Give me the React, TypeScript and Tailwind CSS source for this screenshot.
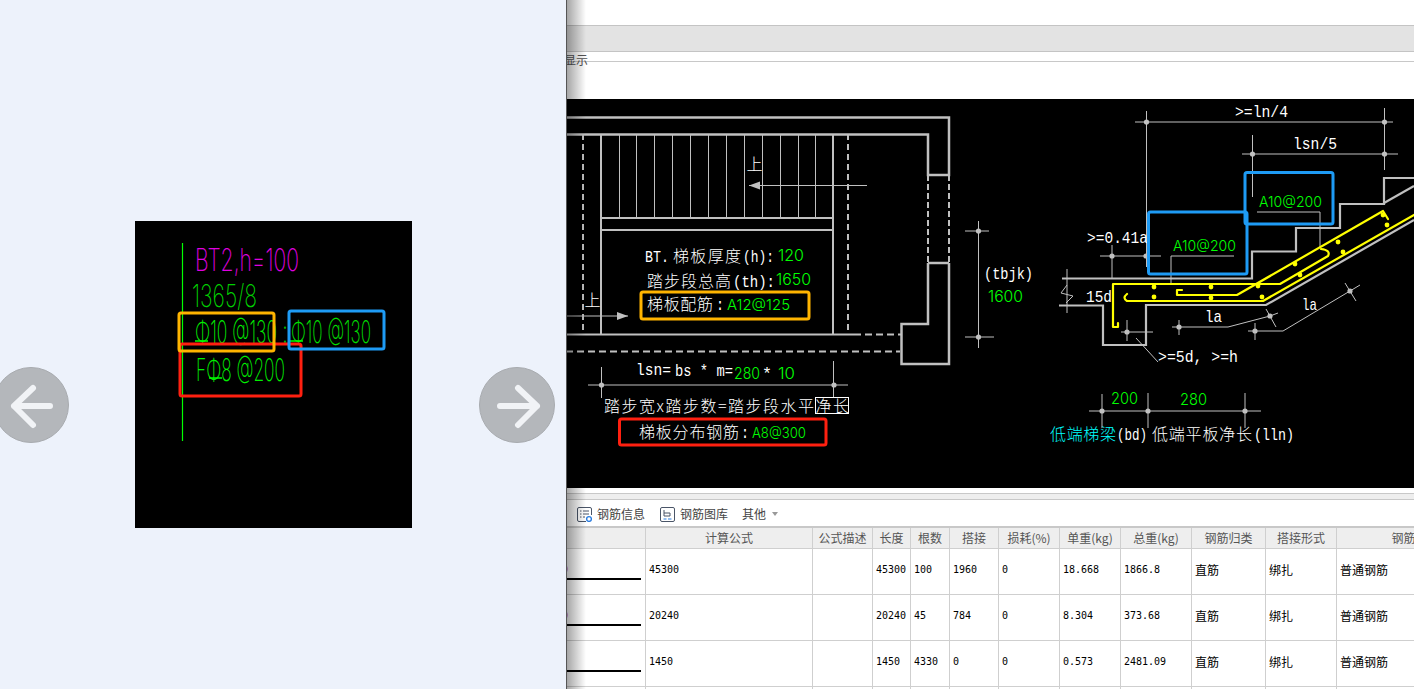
import type { ReactNode } from "react";

const gray = "#c0c0c0";
const green = "#00ff00";

function T({ x, y, w, fill = "#ffffff", size = 16, kind = "cjk", children }: { x: number; y: number; w?: number; fill?: string; size?: number; kind?: "cjk" | "mono" | "sans"; children: ReactNode }) {
  const font =
    kind === "cjk"
      ? "font-['Noto_Sans_CJK_SC',sans-serif] font-light"
      : kind === "mono"
        ? "font-['Liberation_Mono',monospace]"
        : "font-['Inter',sans-serif] font-light";
  const adjust = kind === "cjk" ? "spacing" : "spacingAndGlyphs";
  return (
    <text x={x} y={y} fill={fill} fontSize={size} textLength={w} lengthAdjust={w ? adjust : undefined} className={font}>
      {children}
    </text>
  );
}

// tall, hairline letters of the small plan drawing
function Cad({ x, y, w, fill, children }: { x: number; y: number; w: number; fill: string; children: ReactNode }) {
  return (
    <text x={x} y={y} fill={fill} fontSize={31} textLength={w} lengthAdjust="spacingAndGlyphs" className="font-['Inter',sans-serif] font-extralight">
      {children}
    </text>
  );
}

function Dot({ x, y, fill = gray, r = 2.6 }: { x: number; y: number; fill?: string; r?: number }) {
  return <circle cx={x} cy={y} r={r} fill={fill} />;
}

function Box({ x, y, x2, y2, stroke }: { x: number; y: number; x2: number; y2: number; stroke: string }) {
  return <rect x={x} y={y} width={x2 - x} height={y2 - y} rx={2} fill="none" stroke={stroke} strokeWidth={3} />;
}

function PlanDrawing() {
  return (
    <svg viewBox="135 221 277 307" className="block h-[307px] w-[277px] bg-black">
      <path d="M182.5 243V441" stroke="#00ff00" strokeWidth={1.2} />
      <Cad x={195} y={271} w={104} fill="#e000e0">BT2,h=100</Cad>
      <Cad x={192} y={307} w={65} fill="#00d000">1365/8</Cad>
      <Cad x={195} y={343} w={82} fill="#00f000">Φ10 @130</Cad>
      <Cad x={282} y={343} w={6} fill="#00d000">:</Cad>
      <Cad x={291} y={343} w={80} fill="#00e000">Φ10 @130</Cad>
      <Cad x={196} y={381} w={89} fill="#00f000">FΦ8 @200</Cad>
      <path d="M195 341H208M290 341H303M209 378H222" stroke="#00ff00" strokeWidth={1.5} />
      <Box x={180} y={344} x2={301} y2={396} stroke="#ff2010" />
      <Box x={179} y={313} x2={274} y2={351} stroke="#ffb400" />
      <Box x={289} y={311} x2={384} y2={349} stroke="#1e9bf5" />
    </svg>
  );
}

function StairDrawing() {
  const treads = [619.5, 636.5, 654.5, 672.5, 690.5, 708.5, 726.5, 744.5, 762.5, 780.5, 798.5, 815.5];
  return (
    <svg viewBox="566 99 848 389" className="block h-[389px] w-[848px] bg-black">
      {/* stair plan */}
      <g fill="none" stroke={gray} strokeWidth={2.5}>
        <path d="M566 117.5H949V175H928V134.5H566" />
        <path d="M928 263H949M928 263V324H901.5V364H949V263" />
        <path d="M928 175V263M949 175V263" strokeDasharray="6 3" strokeWidth={2} />
        <path d="M583 134V334M848 134V334" strokeDasharray="6 4" strokeWidth={2} />
        <path d="M601 134V334M833 134V334" strokeWidth={2} />
        <path d="M601 218H833M601 230H833" strokeWidth={2} />
        <path d="M566 334.5H854" strokeWidth={2} />
        <path d="M854 334.5H901M566 351.5H900" strokeDasharray="7 4" strokeWidth={2} />
      </g>
      <g stroke={gray} strokeWidth={1} fill="none">
        {treads.map((x) => (
          <path key={x} d={`M${x} 135V218`} />
        ))}
        <path d="M749 185.5H867M566 316H628" />
        <path d="M588 385H848M601.5 367V398M833.5 361V398" />
        <path d="M978.5 221V348M965 231H989M965 337H994" />
      </g>
      <path d="M749 185.5L760 181.5V189.5Z" fill={gray} />
      <path d="M628 316L617 312V320Z" fill={gray} />
      <Dot x={601.5} y={385} />
      <Dot x={834} y={385} />
      <Dot x={978.5} y={231} />
      <Dot x={978.5} y={337} />
      <T x={746.5} y={170}>上</T>
      <T x={584.5} y={306}>上</T>
      <T x={645} y={262} w={24} kind="mono">BT.</T>
      <T x={673} y={262} w={68}>梯板厚度</T>
      <T x={743} y={262} w={31} kind="mono">(h):</T>
      <T x={778} y={261} w={26} fill={green} kind="sans">120</T>
      <T x={647} y={287} w={84}>踏步段总高</T>
      <T x={733} y={287} w={42} kind="mono">(th):</T>
      <T x={776} y={285} w={35} fill={green} kind="sans">1650</T>
      <T x={647} y={310} w={66}>梯板配筋</T>
      <T x={716} y={310} w={8} kind="mono">:</T>
      <T x={727} y={310} w={63} fill={green} size={15} kind="sans">A12@125</T>
      <T x={636} y={375} w={35} kind="mono">lsn=</T>
      <T x={675} y={376} w={58} kind="mono">bs * m=</T>
      <T x={734} y={379} w={26} fill={green} kind="sans">280</T>
      <T x={762} y={379} w={10} kind="mono">*</T>
      <T x={778} y={379} w={17} fill={green} kind="sans">10</T>
      <T x={604} y={412} w={245}>踏步宽x踏步数=踏步段水平净长</T>
      <rect x={815.5} y={397.5} width={33} height={16} fill="none" stroke="#ffffff" strokeWidth={1} />
      <T x={639} y={438} w={100}>梯板分布钢筋</T>
      <T x={741} y={438} w={8} kind="mono">:</T>
      <T x={752} y={438} w={54} fill={green} size={15} kind="sans">A8@300</T>
      <Box x={641} y={292} x2={809} y2={319} stroke="#ffb400" />
      <Box x={619.5} y={419} x2={826} y2={445} stroke="#ff2010" />
      <T x={984} y={279} w={49} size={17} kind="mono">(tbjk)</T>
      <T x={988} y={302} w={35} fill={green} kind="sans">1600</T>

      {/* stair section */}
      <g stroke={gray} strokeWidth={1} fill="none">
        <path d="M1135 122H1393M1146.5 111V267M1384.5 108V170" />
        <path d="M1242 154H1398M1252.5 135V197" />
        <path d="M1100 256H1161M1112 245V278" />
        <path d="M1257 212H1320V247M1171 256H1234M1171 256V283" />
        <path d="M1067 269V313M1067 285L1061 293L1073 296L1066 303" />
        <path d="M1121 332H1153M1127 320V341M1136 338L1158 362" />
        <path d="M1172 327H1228L1270 316M1179 320V335M1266 309L1276 327M1270 316L1278 313" />
        <path d="M1248 331H1283L1350 291M1255 323V340M1345 283L1356 301M1350 291L1360 285" />
        <path d="M1089 411H1261M1102 394V428M1148 393V428M1245 393V428" />
      </g>
      <g fill="none" stroke={gray} strokeWidth={2.2}>
        <path d="M1062 278.5H1252V251.5H1296V228H1340V204H1384V178H1414" />
        <path d="M1384 203L1414 186" />
        <path d="M1059 305.5H1103V345H1146V305H1266L1414 220" />
      </g>
      <g fill="none" stroke="#ffff00" strokeWidth={2.2} strokeLinejoin="round" strokeLinecap="round">
        <path d="M1113 284V327H1118V323M1113 284H1280L1328 256Q1331 250 1321 249" />
        <path d="M1127 294Q1122 298 1127 301H1263L1414 215" />
        <path d="M1182 290H1177V295H1237L1383 211L1388 219" />
      </g>
      {[[1154, 287], [1154, 297], [1211, 287], [1211, 298], [1258, 286], [1262, 297], [1295, 264], [1300, 275], [1338, 242], [1343, 252], [1383, 215], [1387, 225]].map(([x, y]) => (
        <Dot key={`${x}-${y}`} x={x} y={y} fill="#ffff00" r={2.4} />
      ))}
      {[[1146.5, 122], [1384.5, 122], [1252.5, 154], [1384.5, 154], [1112, 256], [1146, 256], [1179, 327], [1270, 316], [1255, 331], [1350, 291], [1127, 332], [1102, 411], [1148, 411], [1245, 411]].map(([x, y]) => (
        <Dot key={`${x}-${y}`} x={x} y={y} />
      ))}
      <T x={1235} y={117} w={53} size={17} kind="mono">{">=ln/4"}</T>
      <T x={1293} y={149} w={44} size={17} kind="mono">lsn/5</T>
      <T x={1087} y={243} w={61} size={17} kind="mono">{">=0.41a"}</T>
      <T x={1086} y={302} w={26} size={17} kind="mono">15d</T>
      <T x={1205} y={322} w={17} size={17} kind="mono">la</T>
      <T x={1302} y={310} w={15} size={17} kind="mono">la</T>
      <T x={1158} y={362} w={80} size={17} kind="mono">{">=5d, >=h"}</T>
      <T x={1259} y={207} w={63} fill={green} size={15} kind="sans">A10@200</T>
      <T x={1173} y={251} w={63} fill={green} size={15} kind="sans">A10@200</T>
      <T x={1111} y={404} w={27} fill={green} kind="sans">200</T>
      <T x={1180} y={405} w={27} fill={green} kind="sans">280</T>
      <T x={1050} y={440} w={66} fill="#00ffff">低端梯梁</T>
      <T x={1117} y={440} w={30} kind="mono">(bd)</T>
      <T x={1152} y={440} w={100}>低端平板净长</T>
      <T x={1254} y={440} w={40} kind="mono">(lln)</T>
      <Box x={1148.5} y={212} x2={1247} y2={274} stroke="#1e9bf5" />
      <Box x={1245} y={172.5} x2={1333} y2={224} stroke="#1e9bf5" />
    </svg>
  );
}

function PageArrow({ dir }: { dir: "left" | "right" }) {
  return (
    <button className={dir === "left" ? "absolute left-[-7px] top-[367px] size-[76px] rounded-full border border-[#a8abaf] bg-[#b4b7bb]" : "absolute left-[479px] top-[367px] size-[76px] rounded-full border border-[#a8abaf] bg-[#b4b7bb]"}>
      <svg viewBox="0 0 76 76" className="size-[76px]" fill="none" stroke="#f1f3f6" strokeWidth={6} strokeLinecap="round" strokeLinejoin="round">
        {dir === "left" ? <path d="M56 38H20M39 20L20 38L39 57" /> : <path d="M20 38H57M38 20L57 38L38 57" />}
      </svg>
    </button>
  );
}

const columns = ["", "计算公式", "公式描述", "长度", "根数", "搭接", "损耗(%)", "单重(kg)", "总重(kg)", "钢筋归类", "搭接形式", "钢筋图形"];

const rows = [
  ["45300", "", "45300", "100", "1960", "0", "18.668", "1866.8"],
  ["20240", "", "20240", "45", "784", "0", "8.304", "373.68"],
  ["1450", "", "1450", "4330", "0", "0", "0.573", "2481.09"],
  ["", "", "", "", "", "", "", ""],
];

function RebarTable() {
  return (
    <div className="grid grid-cols-[80px_167px_60px_38px_39px_49px_61px_61px_71px_74px_71px_158px] auto-rows-[46px] font-['Noto_Sans_CJK_SC',sans-serif]">
      {columns.map((c, i) => (
        <div key={i} className="flex h-[21px] items-center justify-center border-r border-b border-[#cfcfcf] bg-[#eeeeee] text-[12px] text-[#555555]">
          {c}
        </div>
      ))}
      {rows.map((row, r) => (
        <div key={r} className="contents">
          <div className="-mt-[25px] relative flex h-[46px] items-center overflow-hidden border-r border-b border-[#cfcfcf] pb-[4px] font-['DejaVu_Sans_Mono',monospace] text-[10px] text-[#cc0000]">
            <span className="-ml-[4px]">{r < 2 ? "0" : ""}</span>
            {r < 3 && <span className="absolute bottom-[14px] left-0 h-[2px] w-[75px] bg-black" />}
          </div>
          {row.map((v, i) => (
            <div key={i} className="-mt-[25px] flex h-[46px] items-center border-r border-b border-[#cfcfcf] pb-[4px] pl-[3px] font-['DejaVu_Sans_Mono',monospace] text-[10px] text-black">
              {v}
            </div>
          ))}
          {["直筋", "绑扎", "普通钢筋"].map((v) => (
            <div key={v} className="-mt-[25px] flex h-[46px] items-center border-r border-b border-[#cfcfcf] pb-[4px] pl-[3px] text-[12px] text-black">
              {r < 3 ? v : ""}
            </div>
          ))}
        </div>
      ))}
    </div>
  );
}

export default function App() {
  return (
    <div className="flex h-[689px] w-full overflow-hidden bg-white">
      <div className="relative h-full w-[566px] shrink-0 bg-[#edf2fb] pl-[135px] pt-[221px]">
        <PlanDrawing />
        <PageArrow dir="left" />
        <PageArrow dir="right" />
      </div>

      <div className="relative min-w-0 flex-1 overflow-hidden">
        <div className="h-[25px]" />
        <div className="h-[27px] border-y border-[#c4c4c4] bg-[#e3e3e3]" />
        <div className="h-[10px] border-b border-[#c8c8c8] font-['Noto_Sans_CJK_SC',sans-serif] text-[12px] leading-[12px] text-[#555555]">
          <p className="-ml-[2px] pt-[2px]">显示</p>
        </div>
        <div className="h-[37px]" />
        <StairDrawing />
        <div className="h-[5px]" />
        <div className="h-[7px] border-y border-[#c8c8c8] bg-[#eeeeee]" />
        <div className="flex h-[28px] items-center border-b-2 border-[#c8c8c8] pl-[11px] pt-[2px] font-['Noto_Sans_CJK_SC',sans-serif] text-[12px] text-[#444444]">
          <svg viewBox="0 0 15 15" className="size-[15px]" fill="none" stroke="#4a5568" strokeWidth={1}>
            <path d="M9 14.5H2A1.5 1.5 0 0 1 .5 13V2A1.5 1.5 0 0 1 2 .5H13A1.5 1.5 0 0 1 14.5 2V8" />
            <path d="M3 4H4.5M6 4H12M3 7H4.5M6 7H12M3 10H4.5M6 10H8" />
            <circle cx={12} cy={12} r={2.4} fill="#ffffff" stroke="#2b7de0" strokeWidth={1.4} />
          </svg>
          <span className="ml-[5px]">钢筋信息</span>
          <svg viewBox="0 0 15 15" className="ml-[15px] size-[15px]" fill="none" stroke="#4a5568" strokeWidth={1}>
            <rect x={0.5} y={0.5} width={14} height={14} rx={1.5} />
            <path d="M4 3V9H10V6H4" />
            <path d="M3.5 12H6.5M8 12H11.5" stroke="#2b7de0" />
          </svg>
          <span className="ml-[5px]">钢筋图库</span>
          <span className="ml-[14px]">其他</span>
          <span className="ml-[6px] border-x-[3px] border-t-[4px] border-x-transparent border-t-[#999999]" />
        </div>
        <RebarTable />
        <div className="pointer-events-none absolute inset-y-0 left-0 w-[20px] border-l border-[#555555] bg-gradient-to-r from-black/35 to-transparent" />
      </div>
    </div>
  );
}
